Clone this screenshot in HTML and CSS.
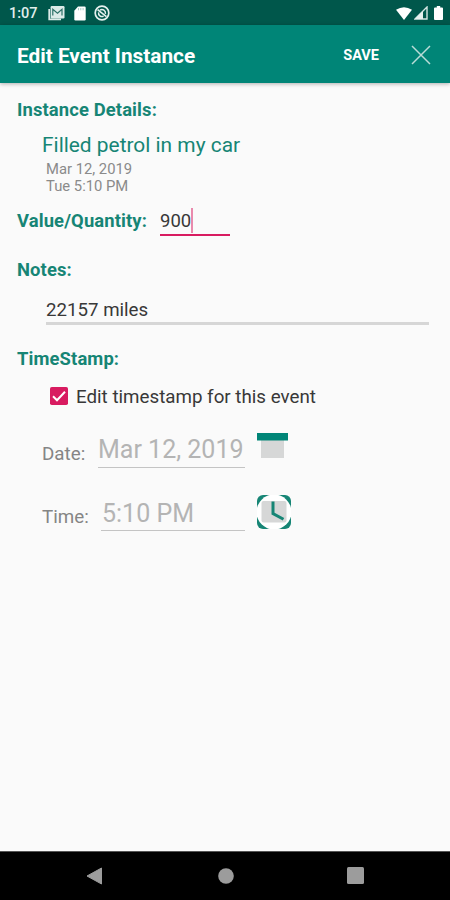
FILE: index.html
```html
<!DOCTYPE html>
<html lang="en">
<head>
    <meta charset="UTF-8">
    <meta name="viewport" content="width=device-width, initial-scale=1.0">
    <title>Edit Event Instance</title>
    <link rel="stylesheet" href="styles.css">
</head>
<body>
    <div class="status-bar">
        <span class="clock">1:07</span>
        <svg class="status-mail" width="17" height="16" viewBox="0 0 17 16">
            <path d="M1.2 4v10.3H13" fill="none" stroke="#dcebe8" stroke-width="1.7"/>
            <rect x="2.6" y="1" width="13.9" height="12.4" rx="1.2" fill="#dcebe8"/>
            <path d="M4.8 10.5V4.3l4.7 3.9L14 4.3v6.2" fill="none" stroke="#2b7066" stroke-width="1.2"/>
        </svg>
        <svg class="status-sd" width="12" height="15" viewBox="0 0 12 15">
            <path d="M4 .5h6.5q1.2 0 1.2 1.2v11.6q0 1.2-1.2 1.2h-9Q.3 14.5.3 13.3V4.8z" fill="#fff"/>
            <path d="M4.5 2v2.3M6.8 2v2.3M9.1 2v2.3" stroke="#a9cbc5" stroke-width="1"/>
        </svg>
        <svg class="status-sync" width="16" height="16" viewBox="0 0 16 16" fill="none" stroke="#e6f1ef">
            <circle cx="8" cy="8" r="6.8" stroke-width="1.7"/>
            <path d="M3.6 4.6l8.8 7" stroke-width="1.7"/>
            <path d="M6 5.2a3.5 3.5 0 0 1 5.4 3.6M9.6 11.2A3.5 3.5 0 0 1 4.6 7.4" stroke-width="1.5"/>
        </svg>
        <div class="status-right">
            <svg width="16" height="13" viewBox="0 0 16 13">
                <path d="M0 2.8Q8-2.2 16 2.8L8 13z" fill="#fff"/>
            </svg>
            <svg width="14" height="14" viewBox="0 0 14 14">
                <path d="M13 1v12H1z" fill="none" stroke="#d5e6e3" stroke-width="1.4"/>
                <path d="M9 5v8H1z" fill="#e6f1ef"/>
            </svg>
            <svg class="battery" width="9" height="14" viewBox="0 0 9 14">
                <path d="M2.8 0h3.4v1.5H8q1 0 1 1V13q0 1-1 1H1q-1 0-1-1V2.5q0-1 1-1h1.8z" fill="#fff"/>
            </svg>
        </div>
    </div>

    <header class="app-bar">
        <h1>Edit Event Instance</h1>
        <span class="save">SAVE</span>
        <svg class="close" width="20" height="20" viewBox="0 0 20 20">
            <path d="M1 1l18 18M19 1L1 19" stroke="#b9dcd7" stroke-width="1.5"/>
        </svg>
    </header>

    <main class="content">
        <h2 class="label-details">Instance Details:</h2>
        <div class="details">
            <div class="event-name">Filled petrol in my car</div>
            <div class="event-meta">Mar 12, 2019</div>
            <div class="event-meta">Tue 5:10 PM</div>
        </div>

        <div class="value-row">
            <h2 class="label-value">Value/Quantity:</h2>
            <div class="value-input"><span>900</span><i class="caret"></i></div>
        </div>

        <h2 class="label-notes">Notes:</h2>
        <div class="notes-input"><span>22157 miles</span></div>

        <h2 class="label-timestamp">TimeStamp:</h2>
        <div class="check-row">
            <svg width="18" height="18" viewBox="0 0 18 18">
                <rect width="18" height="18" rx="1.8" fill="#d81b60"/>
                <path d="M3 9.2l4 4 8-8.4" fill="none" stroke="#fff" stroke-width="2"/>
            </svg>
            <span class="check-text">Edit timestamp for this event</span>
        </div>

        <div class="picker-row">
            <span class="picker-label">Date:</span>
            <div class="picker-value date-value"><span>Mar 12, 2019</span></div>
            <svg class="picker-icon" width="34" height="34" viewBox="0 0 34 34">
                <rect x="4" y="7" width="23" height="18" fill="#d6d7d7"/>
                <rect x="0" y="0" width="31" height="7.5" fill="#008577"/>
            </svg>
        </div>
        <div class="picker-row time-row">
            <span class="picker-label">Time:</span>
            <div class="picker-value time-value"><span>5:10 PM</span></div>
            <svg class="picker-icon" width="34" height="34" viewBox="0 0 34 34">
                <rect width="34" height="34" rx="6" fill="#168575"/>
                <circle cx="17" cy="17" r="17.5" fill="#fff"/>
                <rect x="4.5" y="6" width="25" height="21.5" rx="2" fill="#d6d7d7"/>
                <path d="M16 6.5v12l10.5 5.7" fill="none" stroke="#168575" stroke-width="3"/>
            </svg>
        </div>
    </main>

    <nav class="nav-bar">
        <svg width="18" height="18" viewBox="0 0 18 18"><path d="M1 9L15.5 1v16z" fill="#9c9c9c" stroke="#9c9c9c" stroke-linejoin="round"/></svg>
        <svg width="16" height="16" viewBox="0 0 16 16"><circle cx="8" cy="8" r="7.8" fill="#9c9c9c"/></svg>
        <svg width="17" height="17" viewBox="0 0 17 17"><rect width="17" height="17" rx="1.5" fill="#9c9c9c"/></svg>
    </nav>
</body>
</html>
```
FILE: styles.css
```css
* {
    box-sizing: border-box;
}

body {
    margin: 0;
    height: 900px;
    display: flex;
    flex-direction: column;
    overflow: hidden;
    background: #fafafa;
    color: #383838;
    font-family: Roboto, sans-serif;
}

h1, h2 {
    margin: 0;
}

svg {
    display: block;
    flex: none;
}

span, h1, h2, .event-name, .event-meta {
    white-space: nowrap;
}

.status-bar {
    flex: none;
    display: flex;
    align-items: center;
    height: 25px;
    padding: 1px 7px 0 9px;
    background: #00574b;
    color: #e0eeeb;
}

.clock {
    width: 39px;
    font-size: 14.5px;
    font-weight: 500;
}

.status-sd {
    margin-left: 9px;
}

.status-sync {
    margin-left: 8px;
}

.status-right {
    display: flex;
    align-items: center;
    gap: 2px;
    margin-left: auto;
}

.battery {
    margin-left: 4px;
}

.app-bar {
    flex: none;
    position: relative;
    display: flex;
    align-items: center;
    height: 58px;
    padding: 3px 19px 0 17px;
    background: #008577;
    box-shadow: 0 1px 4px rgba(0, 0, 0, 0.3);
    color: #fff;
}

.app-bar h1 {
    font-size: 20.8px;
    font-weight: 700;
}

.save {
    margin-left: auto;
    font-size: 14.5px;
    font-weight: 700;
}

.close {
    margin: -1px 0 0 32px;
}

.content {
    flex: 1;
    padding: 14px 21px 0 17px;
}

h2 {
    height: 26px;
    line-height: 26px;
    font-size: 18.4px;
    font-weight: 700;
    letter-spacing: 0.12px;
    color: #168575;
}

.details {
    padding: 8px 0 0 25px;
}

.event-name {
    height: 29px;
    line-height: 29px;
    font-size: 20.9px;
    color: #168575;
}

.event-meta {
    height: 17px;
    padding-left: 4px;
    line-height: 18px;
    font-size: 14.8px;
    color: #8a8a8a;
}

.value-row {
    display: flex;
    height: 42px;
    padding-top: 14px;
}

.label-value {
    width: 143px;
}

.value-input {
    display: flex;
    align-items: center;
    width: 70px;
    height: 28px;
    border-bottom: 2px solid #d81b60;
    font-size: 18.5px;
}

.caret {
    width: 2px;
    height: 25px;
    margin-top: -2px;
    background: #e98aad;
}

.label-notes {
    margin-top: 20px;
    line-height: 27px;
}

.notes-input {
    height: 29px;
    margin: 14px 0 0 29px;
    border-bottom: 3px solid #d6d6d6;
    line-height: 29px;
    font-size: 18.7px;
}

.label-timestamp {
    margin-top: 21px;
}

.check-row {
    display: flex;
    align-items: center;
    height: 26px;
    margin-top: 11px;
    padding-left: 33px;
}

.check-text {
    margin-left: 8px;
    line-height: 26px;
    padding-top: 1px;
    font-size: 18.75px;
}

.picker-row {
    display: flex;
    height: 36px;
    margin-top: 23px;
    padding-left: 25px;
}

.time-row {
    margin-top: 27px;
}

.picker-label {
    line-height: 44px;
    font-size: 18.8px;
    color: #858585;
}

.picker-value {
    height: 36px;
    margin-left: auto;
    border-bottom: 1px solid #c4c4c4;
    line-height: 36px;
    font-size: 25px;
    color: #b4b4b4;
}

.date-value {
    width: 147px;
}

.time-value {
    width: 144px;
    padding-left: 1px;
    line-height: 37px;
}

.picker-icon {
    margin: 1px 138px 0 12px;
}

.time-row .picker-icon {
    margin-top: 0;
}

.nav-bar {
    flex: none;
    display: flex;
    align-items: center;
    justify-content: space-between;
    height: 49px;
    padding: 0 86px 1px;
    border-top: 1px solid #555;
    background: #000;
}
```
